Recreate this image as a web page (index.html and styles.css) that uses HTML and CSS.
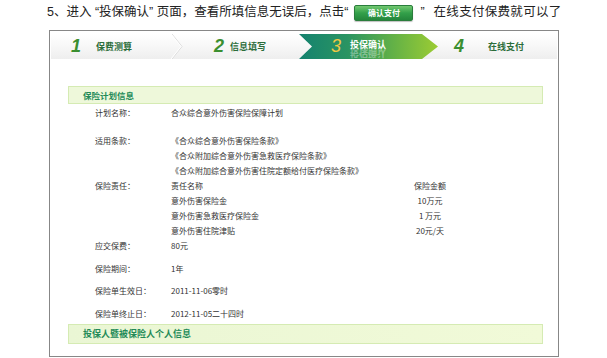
FILE: index.html
```html
<!DOCTYPE html>
<html lang="zh-CN">
<head>
<meta charset="utf-8">
<title>投保确认</title>
<link rel="stylesheet" href="styles.css">
</head>
<body>
<div class="title">5、进入 “投保确认” 页面，查看所填信息无误后，点击“<span class="btn">确认支付</span>”<span class="after">在线支付保费就可以了</span></div>
<div class="box">
  <div class="steps">
    <div class="step step-1"><span class="num">1</span><span class="label">保费测算</span></div>
    <svg class="sep" width="12" height="25" viewBox="0 0 12 25"><polyline points="1,0 11,12.5 1,25" fill="none" stroke="#dcdcdc" stroke-width="1"/><polyline points="0,0 10,12.5 0,25" fill="none" stroke="#ffffff" stroke-width="1"/></svg>
    <div class="step step-2"><span class="num">2</span><span class="label">信息填写</span></div>
    <div class="step step-3 active"><span class="num">3</span><span class="label label-active">投保确认</span></div>
    <div class="step step-4"><span class="num">4</span><span class="label">在线支付</span></div>
  </div>

  <div class="section">保险计划信息</div>

  <div class="fields">
    <div class="field f-first"><span class="key">计划名称：</span><span class="val">合众综合意外伤害保险保障计划</span></div>
    <div class="field f-clause"><span class="key">适用条款：</span>
      <span class="val">
        <span class="line">《合众综合意外伤害保险条款》</span>
        <span class="line">《合众附加综合意外伤害急救医疗保险条款》</span>
        <span class="line">《合众附加综合意外伤害住院定额给付医疗保险条款》</span>
      </span>
    </div>
    <div class="field"><span class="key">保险责任：</span>
      <span class="val duty">
        <span>责任名称</span><span class="amt">保险金额</span>
        <span>意外伤害保险金</span><span class="amt">10万元</span>
        <span>意外伤害急救医疗保险金</span><span class="amt">1 万元</span>
        <span>意外伤害住院津贴</span><span class="amt">20元/天</span>
      </span>
    </div>
    <div class="field"><span class="key">应交保费：</span><span class="val">80元</span></div>
    <div class="field f-gap"><span class="key">保险期间：</span><span class="val">1年</span></div>
    <div class="field f-gap"><span class="key">保险单生效日：</span><span class="val">2011-11-06零时</span></div>
    <div class="field f-gap"><span class="key">保险单终止日：</span><span class="val">2012-11-05二十四时</span></div>
  </div>

  <div class="section section-2">投保人暨被保险人个人信息</div>
</div>
</body>
</html>
```

FILE: styles.css
```css
body {
  margin: 0;
  background: #ffffff;
  font-family: "Noto Sans CJK SC", "Noto Sans", sans-serif;
  color: #333333;
}

.title {
  height: 24px;
  line-height: 24px;
  padding-left: 47px;
  font-family: "Liberation Sans", "Noto Sans CJK SC", sans-serif;
  font-size: 12.5px;
  color: #222222;
  white-space: nowrap;
}

.btn {
  display: inline-block;
  vertical-align: top;
  margin: 5px 7px 0 6px;
  width: 57px;
  height: 14px;
  line-height: 14px;
  text-align: center;
  font-family: "Noto Sans CJK SC", sans-serif;
  font-size: 8px;
  font-weight: 700;
  color: #ffffff;
  background: linear-gradient(#72c870, #33a04a 50%, #24863b);
  border: 1px solid #2a7d3c;
  border-radius: 2px;
  box-shadow: 0 1px 1px rgba(0, 0, 0, 0.25);
}

.after {
  margin-left: 9px;
  letter-spacing: 0.3px;
}

.box {
  margin: 6px 0 0 49px;
  width: 508px;
  border: 1px solid #878787;
  padding-bottom: 12px;
}

.steps {
  display: flex;
  height: 25px;
  margin: 3px 1px 0 1px;
  background: linear-gradient(#ffffff, #f7f7f7 50%, #eeeeee);
}

.step {
  display: flex;
  align-items: center;
  height: 25px;
  box-sizing: border-box;
}

.step-1 { width: 120px; padding-left: 20px; gap: 15px; }
.step-2 { width: 116px; padding-left: 31px; gap: 6px; }
.step-3 { width: 139px; padding-left: 32px; gap: 9px; }
.step-4 { flex: 1; padding-left: 16px; gap: 24px; }

.sep { display: block; flex: none; }

.num {
  font-family: "Liberation Sans", Arial, sans-serif;
  font-style: italic;
  font-weight: 700;
  font-size: 18px;
  color: #3b8f30;
  line-height: 25px;
}

.label {
  font-size: 9px;
  font-weight: 700;
  color: #2b6d3a;
  line-height: 11px;
}

.active {
  background: linear-gradient(90deg, #14826f 0%, #2a9462 35%, #67b345 70%, #9ccc33 100%);
  clip-path: polygon(0 0, calc(100% - 16px) 0, 100% 50%, calc(100% - 16px) 100%, 0 100%, 13px 50%);
}

.active .num {
  color: #f2c843;
  font-weight: 400;
}

.label-active {
  position: relative;
  color: #ffffff;
  margin-top: -4px;
}

.label-active::after {
  content: "投保确认";
  position: absolute;
  left: 0;
  top: 9px;
  transform: scaleY(-1);
  opacity: 0.35;
  pointer-events: none;
}

.section {
  margin: 27px 15px 0 18px;
  height: 16px;
  line-height: 16px;
  padding-left: 14px;
  background: #eef8da;
  border: 1px solid #d5ebb3;
  font-size: 8.5px;
  font-weight: 700;
  color: #238a58;
}

.section-2 {
  margin-top: 3px;
  height: 18px;
  line-height: 18px;
  background: linear-gradient(90deg, #eaf6d4, #f1fad8);
  font-size: 9px;
}

.fields {
  padding-left: 45px;
  font-size: 8px;
  line-height: 15px;
}

.field { display: flex; }

.f-first { margin-top: 1px; }
.f-clause { margin-top: 13px; }
.f-gap { margin-top: 7.5px; }

.key {
  width: 76px;
  flex: none;
  white-space: nowrap;
}

.val {
  display: flex;
  flex-direction: column;
}

.duty {
  display: grid;
  grid-template-columns: 224px 70px;
}

.amt { text-align: center; }
```
